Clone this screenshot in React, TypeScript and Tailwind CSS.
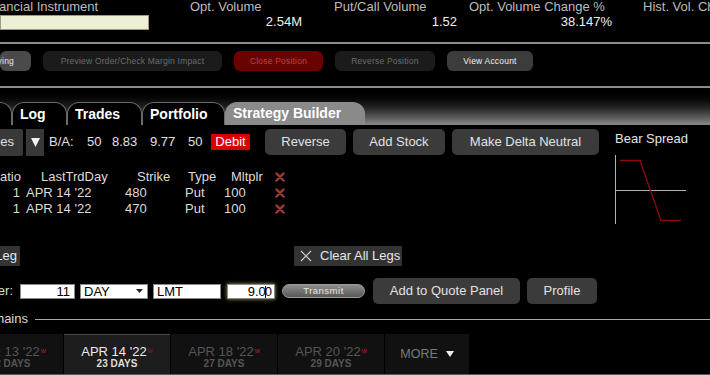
import React from 'react';

// cut-off item: text is right aligned inside a fixed box and spills out to the left
const Cut: React.FC<{ w: string; className?: string; children: React.ReactNode }> = ({ w, className = '', children }) => (
  <div className={`flex justify-end whitespace-nowrap shrink-0 ${w} ${className}`}>{children}</div>
);

const RedX = () => (
  <svg width="10" height="10" viewBox="0 0 10 10" className="shrink-0">
    <path d="M1.5 1.5 L8.5 8.5 M8.5 1.5 L1.5 8.5" stroke="#a63a3a" strokeWidth="2.4" strokeLinecap="round" />
  </svg>
);

const GrayBtn: React.FC<{ className?: string; children: React.ReactNode }> = ({ className = '', children }) => (
  <div className={`h-[26px] rounded-[5px] bg-[#3b3b3b] text-[#e2e2e2] text-[13px] flex items-center justify-center whitespace-nowrap shrink-0 ${className}`}>
    {children}
  </div>
);

const legs = [
  { ratio: 1, day: "APR 14 '22", strike: 480, type: 'Put', mult: 100 },
  { ratio: 1, day: "APR 14 '22", strike: 470, type: 'Put', mult: 100 },
];

const expiries = [
  { date: "APR 14 '22", days: '23 DAYS', active: true },
  { date: "APR 18 '22", days: '27 DAYS', active: false },
  { date: "APR 20 '22", days: '29 DAYS', active: false },
];

export default function App() {
  return (
    <div className="w-[710px] h-[375px] bg-black overflow-hidden flex flex-col font-['Liberation_Sans',Arial,sans-serif] text-[13px]">
      {/* quote header labels */}
      <div className="flex h-[14px] leading-[14px] text-[#bcbcbc] whitespace-nowrap">
        <div className="w-[190px] overflow-hidden shrink-0">
          <div className="-ml-[19px]">Financial Instrument</div>
        </div>
        <div className="w-[144px] shrink-0">Opt. Volume</div>
        <div className="w-[135px] shrink-0">Put/Call Volume</div>
        <div className="w-[174px] shrink-0">Opt. Volume Change %</div>
        <div className="shrink-0">Hist. Vol. Change</div>
      </div>
      {/* quote header values */}
      <div className="flex h-[16px] items-center text-[#eeeeee] whitespace-nowrap">
        <div className="w-[190px] shrink-0">
          <div className="w-[149px] h-[15px] bg-[#efefd3] border border-[#9a9a8a]" />
        </div>
        <div className="w-[112px] shrink-0 text-right">2.54M</div>
        <div className="w-[155px] shrink-0 text-right">1.52</div>
        <div className="w-[155px] shrink-0 text-right">38.147%</div>
      </div>

      <div className="h-[12px]" />
      <div className="h-[2px] bg-[#8c8c8c]" />

      {/* order action buttons */}
      <div className="h-[42px] pt-[7px] flex gap-[12px] text-[8.5px] tracking-[0.2px]">
        <Cut w="w-[31px]" className="h-[20px] items-center pr-[17px] rounded-[6px] bg-[#4a4a4a] text-[#e8e8e8]">Buying</Cut>
        <div className="w-[179px] h-[20px] rounded-[6px] bg-[#1b1b1b] text-[#6c6c6c] flex items-center justify-center">Preview Order/Check Margin Impact</div>
        <div className="w-[89px] h-[20px] rounded-[6px] bg-[#6b0202] text-[#b44848] flex items-center justify-center">Close Position</div>
        <div className="w-[100px] h-[20px] rounded-[6px] bg-[#1b1b1b] text-[#6c6c6c] flex items-center justify-center">Reverse Position</div>
        <div className="w-[86px] h-[20px] rounded-[6px] bg-[#3c3c3c] text-[#f0f0f0] flex items-center justify-center">View Account</div>
      </div>
      <div className="h-[2px] bg-[#8c8c8c]" />

      {/* tab strip */}
      <div className="h-[37px] bg-linear-to-b from-black via-[#1e1e1e] to-[#8a8a8a] flex items-end font-bold text-white text-[14px]">
        <div className="w-[12px] h-[23px] bg-black border-r border-t border-[#6a6a6a] rounded-tr-[12px] shrink-0" />
        {['Log', 'Trades', 'Portfolio'].map((t, i) => (
          <div
            key={t}
            className={`h-[23px] bg-black border border-b-0 border-[#6a6a6a] rounded-t-[12px] pl-[7px] flex items-center shrink-0 ${
              i === 0 ? 'w-[55px]' : i === 1 ? 'w-[75px]' : 'w-[83px]'
            }`}
          >
            {t}
          </div>
        ))}
        <div className="w-[140px] h-[23px] bg-[#8a8a8a] rounded-t-[12px] pl-[8px] flex items-center shrink-0">Strategy Builder</div>
      </div>

      {/* strategy builder body */}
      <div className="h-[121px] flex">
        <div className="w-[615px] shrink-0 flex flex-col">
          <div className="h-[30px] mt-[2px] flex items-center text-[#e0e0e0] whitespace-nowrap">
            <Cut w="w-[23px]" className="h-[27px] items-center pr-[9px] bg-[#383838] rounded-r-[2px]">Strategies</Cut>
            <div className="ml-[3px] w-[18px] h-[27px] bg-[#383838] flex items-center justify-center">
              <svg width="9" height="10" viewBox="0 0 9 10"><path d="M0 1 H9 L4.5 10 Z" fill="#f2f2f2" /></svg>
            </div>
            <span className="ml-[5px] w-[38px] shrink-0">B/A:</span>
            <span className="w-[25px] shrink-0">50</span>
            <span className="w-[38px] shrink-0">8.83</span>
            <span className="w-[38px] shrink-0">9.77</span>
            <span className="w-[23px] shrink-0">50</span>
            <div className="w-[39px] h-[16px] bg-[#d60000] text-white flex items-center justify-center shrink-0">Debit</div>
            <GrayBtn className="ml-[15px] w-[81px]">Reverse</GrayBtn>
            <GrayBtn className="ml-[7px] w-[92px]">Add Stock</GrayBtn>
            <GrayBtn className="ml-[7px] w-[147px]">Make Delta Neutral</GrayBtn>
          </div>

          <div className="mt-[12px] text-[#dcdcdc] whitespace-nowrap">
            <div className="flex h-[16px] leading-[16px] items-center">
              <Cut w="w-[21px]">Ratio</Cut>
              <div className="ml-[20px] w-[96px]">LastTrdDay</div>
              <div className="w-[51px]">Strike</div>
              <div className="w-[43px]">Type</div>
              <div className="w-[44px]">Mltplr</div>
              <RedX />
            </div>
            {legs.map((l, i) => (
              <div key={i} className="flex h-[16px] leading-[16px] items-center">
                <Cut w="w-[20px]">{l.ratio}</Cut>
                <div className="ml-[6px] w-[99px]">{l.day}</div>
                <div className="w-[60px]">{l.strike}</div>
                <div className="w-[39px]">{l.type}</div>
                <div className="w-[51px]">{l.mult}</div>
                <RedX />
              </div>
            ))}
          </div>
        </div>

        <div className="flex-1 flex flex-col pt-[7px]">
          <div className="h-[14px] leading-[14px] text-[#e4e4e4] whitespace-nowrap">Bear Spread</div>
          <svg width="75" height="70" viewBox="0 0 75 70" className="mt-[9px]">
            <path d="M0.5 0 V69" stroke="#b0b0b0" strokeWidth="1" />
            <path d="M0 35.5 H71" stroke="#b0b0b0" strokeWidth="1" />
            <path d="M5 5.5 H25 L46 65.5 H66" stroke="#8e0a0a" strokeWidth="1.3" fill="none" />
          </svg>
        </div>
      </div>

      {/* legs row */}
      <div className="h-[20px] flex text-[#e6e6e6] whitespace-nowrap">
        <Cut w="w-[20px]" className="items-center pr-[3px] bg-[#333333]">Add Leg</Cut>
        <div className="ml-[274px] w-[108px] bg-[#333333] flex items-center pl-[6px]">
          <svg width="12" height="12" viewBox="0 0 12 12" className="shrink-0">
            <path d="M1 1 L11 11 M11 1 L1 11" stroke="#d0d0d0" strokeWidth="1.1" />
          </svg>
          <span className="ml-[8px]">Clear All Legs</span>
        </div>
      </div>

      {/* order row */}
      <div className="mt-[12px] h-[26px] flex items-center whitespace-nowrap">
        <Cut w="w-[15px]" className="text-[#dcdcdc] pr-[2px]">Order:</Cut>
        <div className="ml-[5px] w-[55px] h-[15px] bg-white border border-[#8a8a8a] text-black text-right pr-[4px] leading-[13px]">11</div>
        <div className="ml-[5px] w-[68px] h-[15px] bg-white border border-[#8a8a8a] text-black pl-[3px] leading-[13px] flex items-center justify-between pr-[4px]">
          <span>DAY</span>
          <svg width="7" height="4" viewBox="0 0 7 4"><path d="M0 0 H7 L3.5 4 Z" fill="#222" /></svg>
        </div>
        <div className="ml-[5px] w-[68px] h-[15px] bg-white border border-[#8a8a8a] text-black pl-[3px] leading-[13px]">LMT</div>
        <div className="ml-[6px] w-[48px] h-[15px] bg-white border border-[#8a8a8a] shadow-[0_0_4px_#a89456] text-black text-right pr-[2px] leading-[13px]">
          9.0<span className="inline-block w-px h-[12px] bg-black align-middle -mx-px" />0
        </div>
        <div className="ml-[7px] w-[83px] h-[14px] rounded-full bg-linear-to-b from-[#8e8e8e] to-[#595959] border border-[#9a9a9a] text-[#e6e6e6] text-[9.5px] tracking-[0.5px] flex items-center justify-center">
          Transmit
        </div>
        <GrayBtn className="ml-[8px] w-[147px]">Add to Quote Panel</GrayBtn>
        <GrayBtn className="ml-[7px] w-[70px]">Profile</GrayBtn>
      </div>

      {/* option chains heading */}
      <div className="mt-[8px] h-[14px] flex items-center">
        <Cut w="w-[28px]" className="text-[#d8d8d8] leading-[14px]">Option Chains</Cut>
        <div className="ml-[7px] flex-1 h-px bg-[#a8a8a8]" />
      </div>

      {/* expiry tabs */}
      <div className="mt-[8px] h-[40px] flex gap-px">
        <div className="w-[63px] overflow-hidden bg-[#111111] shrink-0">
          <div className="-ml-[43px] w-[106px] flex flex-col items-center pt-[11px] text-[#555555]">
            <div className="h-[14px] leading-[14px] whitespace-nowrap">
              APR 13 '22<sup className="text-[7px] text-[#b02424] ml-px">w</sup>
            </div>
            <div className="h-[10px] leading-[10px] text-[10px] font-semibold">22 DAYS</div>
          </div>
        </div>
        {expiries.map(e => (
          <div
            key={e.date}
            className={`w-[106px] shrink-0 flex flex-col items-center pt-[11px] ${
              e.active ? 'bg-[#1d1d1d] border-t border-[#4a4a4a] text-[#ececec]' : 'bg-[#111111] text-[#565656]'
            }`}
          >
            <div className={`h-[14px] leading-[14px] whitespace-nowrap ${e.active ? '-mt-px' : ''}`}>
              {e.date}
              <sup className={`text-[7px] ml-px ${e.active ? 'text-[#7a2a2a]' : 'text-[#c01c1c]'}`}>w</sup>
            </div>
            <div className={`h-[10px] leading-[10px] text-[10px] font-semibold ${e.active ? 'text-[#dedede]' : ''}`}>{e.days}</div>
          </div>
        ))}
        <div className="w-[84px] shrink-0 bg-[#111111] flex items-center justify-center gap-[8px] text-[#7a7a7a] text-[12.5px]">
          <span>MORE</span>
          <svg width="8" height="6" viewBox="0 0 8 6"><path d="M0 0 H8 L4 6 Z" fill="#f2f2f2" /></svg>
        </div>
      </div>
      <div className="h-px bg-[#5a5a5a]" />
    </div>
  );
}
